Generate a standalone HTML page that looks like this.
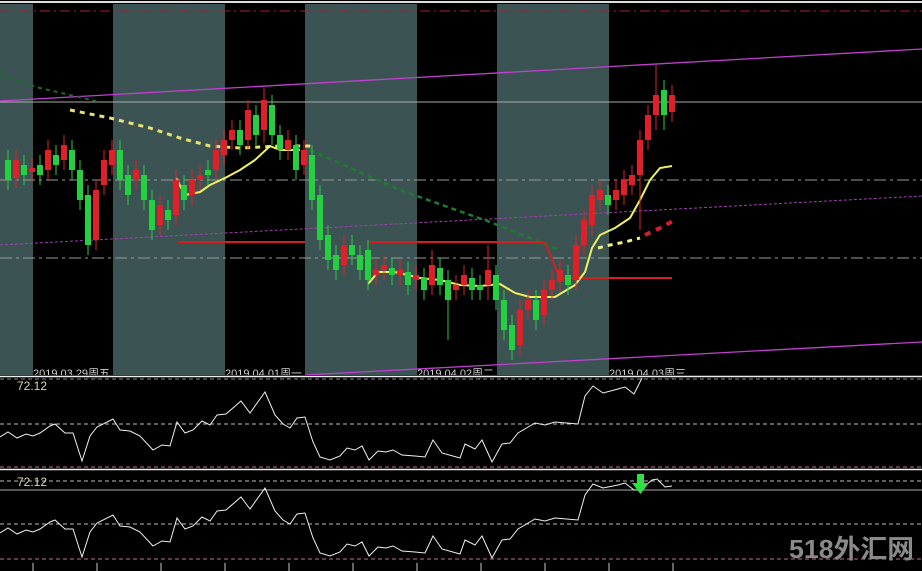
<!DOCTYPE html>
<html><head><meta charset="utf-8"><style>
html,body{margin:0;padding:0;background:#000;width:922px;height:571px;overflow:hidden}
svg{display:block}
text{font-family:"Liberation Sans","Noto Sans CJK SC",sans-serif}
</style></head><body>
<svg width="922" height="571" viewBox="0 0 922 571" xmlns="http://www.w3.org/2000/svg">
<rect width="922" height="571" fill="#000"/>
<g fill="#3b5453">
<rect x="0" y="4" width="33" height="371"/>
<rect x="113" y="4" width="112" height="371"/>
<rect x="305" y="4" width="112" height="371"/>
<rect x="497" y="4" width="112" height="371"/>
</g>
<line x1="0" y1="2" x2="922" y2="2" stroke="#ddd" stroke-width="2"/>
<line x1="0" y1="11" x2="922" y2="11" stroke="#a02030" stroke-width="1" stroke-dasharray="10,4,2,4"/>
<line x1="0" y1="102" x2="922" y2="102" stroke="#aaa" stroke-width="1"/>
<line x1="0" y1="180" x2="922" y2="180" stroke="#9a9a9a" stroke-width="1" stroke-dasharray="12,4,3,4"/>
<line x1="0" y1="258" x2="922" y2="258" stroke="#9a9a9a" stroke-width="1" stroke-dasharray="12,4,3,4"/>
<line x1="0" y1="101" x2="922" y2="49" stroke="#c040d0" stroke-width="1.3"/>
<line x1="305" y1="375" x2="922" y2="342" stroke="#c040d0" stroke-width="1.3"/>
<line x1="0" y1="245" x2="922" y2="196" stroke="#a040b0" stroke-width="1" stroke-dasharray="3,2"/>
<polyline points="0,75 40,88 100,102" fill="none" stroke="#1a6a2a" stroke-width="2" stroke-dasharray="4,4"/>
<polyline points="310,150 400,190 490,222 560,250" fill="none" stroke="#207a30" stroke-width="2.5" stroke-dasharray="5,4"/>
<g stroke="#d02020" stroke-width="2" fill="none">
<line x1="178" y1="242" x2="305" y2="242"/>
<line x1="370" y1="242" x2="545" y2="242"/>
<polyline points="545,242 560,278 672,278"/>
<line x1="575" y1="278" x2="580" y2="245"/>
</g>
<polyline points="70,110 110,118 150,128 180,138 210,146 240,148 280,146 315,146" fill="none" stroke="#e8e070" stroke-width="3" stroke-dasharray="5,5"/>
<polyline points="176,178 185,195 200,192 210,185 225,178 240,170 255,160 270,146 280,150 288,150 300,150" fill="none" stroke="#f0f060" stroke-width="2"/>
<polyline points="368,284 378,272 395,272 420,278 440,280 460,285 480,286 500,284 515,293 530,297 555,297 575,285 585,272 592,248 600,235 615,228 630,218 640,200 650,180 660,168 672,166" fill="none" stroke="#f0f060" stroke-width="2"/>
<polyline points="598,248 610,245 625,242 640,238" fill="none" stroke="#f0f080" stroke-width="3" stroke-dasharray="5,5"/>
<polyline points="645,235 660,228 675,220" fill="none" stroke="#d02030" stroke-width="4" stroke-dasharray="6,6"/>
<path fill="none" stroke="#e02028" stroke-width="1" d="M16 150v38 M32 158v24 M48 140v40 M64 135v35 M96 180v70 M104 150v45 M112 140v35 M136 160v30 M160 195v40 M176 170v55 M192 170v35 M200 165v25 M216 140v40 M224 130v35 M232 120v30 M248 100v50 M264 88v55 M288 130v30 M304 140v35 M344 235v40 M376 260v25 M384 255v25 M400 260v25 M416 265v25 M432 250v45 M456 275v25 M464 265v30 M488 245v55 M520 300v55 M528 290v30 M544 280v45 M552 270v30 M560 260v32 M576 235v55 M584 210v45 M592 185v50 M600 180v30 M616 180v30 M624 170v35 M632 165v30 M640 130v100 M648 105v45 M656 65v65 M672 85v37"/>
<path fill="#e02028" d="M13 160h6v18h-6z M29 168h6v4h-6z M45 150h6v20h-6z M61 145h6v15h-6z M93 190h6v50h-6z M101 160h6v25h-6z M109 150h6v15h-6z M133 170h6v10h-6z M157 205h6v20h-6z M173 180h6v35h-6z M189 180h6v15h-6z M197 175h6v5h-6z M213 150h6v20h-6z M221 140h6v15h-6z M229 130h6v10h-6z M245 110h6v30h-6z M261 100h6v30h-6z M285 140h6v10h-6z M301 150h6v15h-6z M341 245h6v20h-6z M373 270h6v5h-6z M381 265h6v5h-6z M397 270h6v5h-6z M413 275h6v5h-6z M429 265h6v20h-6z M453 285h6v5h-6z M461 275h6v10h-6z M485 270h6v15h-6z M517 310h6v35h-6z M525 300h6v10h-6z M541 290h6v25h-6z M549 280h6v10h-6z M557 270h6v12h-6z M573 245h6v35h-6z M581 220h6v25h-6z M589 195h6v30h-6z M597 190h6v10h-6z M613 190h6v10h-6z M621 180h6v15h-6z M629 175h6v10h-6z M637 140h6v35h-6z M645 115h6v25h-6z M653 95h6v20h-6z M669 95h6v17h-6z"/>
<path fill="none" stroke="#22d040" stroke-width="1" d="M8 150v40 M24 155v30 M40 155v30 M56 145v30 M72 140v40 M80 160v50 M88 185v70 M120 140v50 M128 165v40 M144 165v45 M152 190v50 M168 200v30 M184 175v35 M208 160v25 M240 120v35 M256 105v40 M272 95v50 M280 125v35 M296 135v45 M312 145v65 M320 185v65 M328 225v45 M336 245v35 M352 235v30 M360 245v35 M368 240v50 M392 258v27 M408 262v33 M424 268v32 M440 258v37 M448 270v70 M472 268v32 M480 275v25 M496 265v45 M504 290v50 M512 315v45 M536 290v40 M568 265v30 M608 185v30 M664 80v50"/>
<path fill="#22d040" d="M5 160h6v20h-6z M21 165h6v10h-6z M37 165h6v10h-6z M53 155h6v10h-6z M69 150h6v20h-6z M77 170h6v30h-6z M85 195h6v50h-6z M117 150h6v30h-6z M125 175h6v20h-6z M141 175h6v25h-6z M149 200h6v30h-6z M165 210h6v10h-6z M181 185h6v15h-6z M205 170h6v5h-6z M237 130h6v15h-6z M253 115h6v20h-6z M269 105h6v30h-6z M277 135h6v15h-6z M293 145h6v25h-6z M309 155h6v45h-6z M317 195h6v45h-6z M325 235h6v25h-6z M333 255h6v15h-6z M349 245h6v10h-6z M357 255h6v15h-6z M365 250h6v30h-6z M389 268h6v7h-6z M405 272h6v13h-6z M421 278h6v12h-6z M437 268h6v17h-6z M445 280h6v20h-6z M469 278h6v12h-6z M477 285h6v5h-6z M493 275h6v25h-6z M501 300h6v30h-6z M509 325h6v25h-6z M533 300h6v20h-6z M565 275h6v10h-6z M605 195h6v10h-6z M661 90h6v25h-6z"/>
<g fill="#d0d0d0" font-size="11">
<text x="33" y="377">2019.03.29周五</text>
<text x="225" y="377">2019.04.01周一</text>
<text x="417" y="377">2019.04.02周二</text>
<text x="609" y="377">2019.04.03周三</text>
</g>
<rect x="0" y="375" width="922" height="3" fill="#000"/>
<line x1="0" y1="376.5" x2="922" y2="376.5" stroke="#eee" stroke-width="1.5"/>
<line x1="0" y1="379" x2="922" y2="379" stroke="#888" stroke-dasharray="4,3"/>
<line x1="0" y1="424" x2="922" y2="424" stroke="#bbb" stroke-dasharray="4,3"/>
<line x1="0" y1="467" x2="922" y2="467" stroke="#c07090" stroke-dasharray="4,3"/>
<line x1="0" y1="469.5" x2="922" y2="469.5" stroke="#eee" stroke-width="1.5"/>
<text x="17" y="390" fill="#dcd8a8" font-size="12">72.12</text>
<polyline fill="none" stroke="#f0f0f0" stroke-width="1" points="0,437 8,432 17,438 26,434 33,436 40,433 50,426 55,424 65,433 73,433 82,461 90,436 97,427 113,419 120,430 130,431 140,436 153,450 162,445 170,446 177,422 185,433 193,430 202,421 210,425 217,415 226,414 241,401 250,413 265,392 275,415 283,424 290,428 297,418 305,417 313,442 320,457 330,460 340,456 347,448 355,450 362,446 369,460 378,451 386,452 393,450 402,455 415,456 425,457 433,440 442,453 460,458 465,444 475,449 482,440 492,462 502,444 510,443 518,433 535,423 545,425 555,422 578,424 585,396 593,386 603,393 618,389 625,387 634,394 642,378"/>
<line x1="0" y1="481" x2="922" y2="481" stroke="#bbb" stroke-dasharray="4,3"/>
<line x1="0" y1="490" x2="922" y2="490" stroke="#aaa"/>
<line x1="0" y1="524" x2="922" y2="524" stroke="#bbb" stroke-dasharray="4,3"/>
<line x1="0" y1="559" x2="922" y2="559" stroke="#c07090" stroke-dasharray="4,3"/>
<text x="17" y="486" fill="#dcd8a8" font-size="12">72.12</text>
<polyline fill="none" stroke="#f0f0f0" stroke-width="1" points="0,533 8,528 17,534 26,530 33,532 40,529 50,522 55,520 65,529 73,529 82,557 90,532 97,523 113,515 120,526 130,527 140,532 153,546 162,541 170,542 177,518 185,529 193,526 202,517 210,521 217,511 226,510 241,497 250,509 265,488 275,511 283,520 290,524 297,514 305,513 313,538 320,553 330,556 340,552 347,544 355,546 362,542 369,556 378,547 386,548 393,546 402,551 415,552 425,553 433,536 442,549 460,554 465,540 475,545 482,536 492,558 502,540 510,539 518,529 535,519 545,521 555,518 578,520 585,495 593,484 603,488 618,485 625,483 634,490 640,490 652,480 657,479 665,487 672,486"/>
<path d="M637 474h7v9h5l-8.5 11l-8.5-11h5z" fill="#30e040"/>
<rect x="0" y="561" width="922" height="10" fill="#000"/>
<g stroke="#ccc"><line x1="33" y1="563" x2="33" y2="571"/><line x1="97" y1="563" x2="97" y2="571"/><line x1="161" y1="563" x2="161" y2="571"/><line x1="225" y1="563" x2="225" y2="571"/><line x1="289" y1="563" x2="289" y2="571"/><line x1="353" y1="563" x2="353" y2="571"/><line x1="417" y1="563" x2="417" y2="571"/><line x1="481" y1="563" x2="481" y2="571"/><line x1="545" y1="563" x2="545" y2="571"/><line x1="609" y1="563" x2="609" y2="571"/><line x1="673" y1="563" x2="673" y2="571"/></g>
<text x="789" y="558" fill="#8a8a8a" font-size="26" font-weight="bold" textLength="125" lengthAdjust="spacingAndGlyphs">518外汇网</text>
</svg>
</body></html>
